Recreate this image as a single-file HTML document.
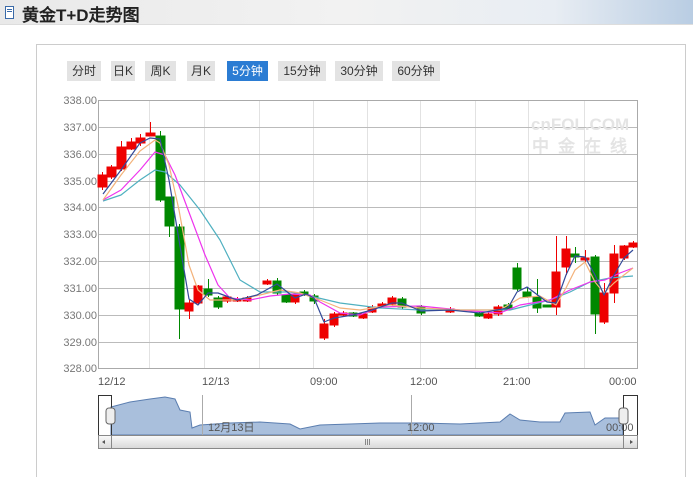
<!DOCTYPE html>
<html style="width:693px;height:477px;overflow:hidden"><head><meta charset="utf-8"><style>
body{margin:0;width:693px;height:477px;overflow:hidden;background:#fff;font-family:"Liberation Sans","Noto Sans CJK SC",sans-serif;position:relative}
.hdr{position:absolute;left:0;top:0;width:693px;height:24px;background:linear-gradient(90deg,#e9e9e9 0%,#f2f2f2 50%,#e8edf3 80%,#b9cde3 100%);border-bottom:1px solid #ddd}
.hdr .t{position:absolute;left:22px;top:1px;font-size:17px;font-weight:bold;color:#222;font-family:"Liberation Sans","WenQuanYi Zen Hei",sans-serif}
.ic{position:absolute;left:5px;top:6px;width:7px;height:11px;border:1px solid #3a6aa8;background:#fff}
.ic:after{content:"";position:absolute;left:1px;top:2px;width:5px;height:1px;background:#3a6aa8;box-shadow:0 2px #3a6aa8}
.panel{position:absolute;left:36px;top:44px;width:648px;height:432px;border:1px solid #ccc;border-bottom:none;background:#fff}
.btn{position:absolute;top:61px;height:20px;line-height:20px;font-size:12px;background:#e3e3e3;color:#333;text-align:center;font-family:"Liberation Sans","WenQuanYi Zen Hei",sans-serif}
.btn.on{background:#2b7cd3;color:#fff}
</style></head><body>
<div class="hdr"><div class="ic"></div><div class="t">黄金T+D走势图</div></div>
<div class="panel"></div>
<div class="btn" style="left:67px;width:34px">分时</div>
<div class="btn" style="left:111px;width:24px">日K</div>
<div class="btn" style="left:145px;width:31px">周K</div>
<div class="btn" style="left:187px;width:28px">月K</div>
<div class="btn on" style="left:227px;width:41px">5分钟</div>
<div class="btn" style="left:278px;width:48px">15分钟</div>
<div class="btn" style="left:335px;width:48px">30分钟</div>
<div class="btn" style="left:392px;width:48px">60分钟</div>
<svg width="693" height="477" style="position:absolute;left:0;top:0" font-family="Liberation Sans, sans-serif">
<g stroke="#e2e2e2" stroke-width="1">
<path d="M149.5 100V369M204.5 100V369M259.5 100V369M313.5 100V369M367.5 100V369M420.5 100V369M475.5 100V369M528.5 100V369M584.5 100V369"/>
</g>
<g stroke="#bbb" stroke-width="1">
<path d="M98 127.5H638M98 154.5H638M98 181.5H638M98 207.5H638M98 234.5H638M98 261.5H638M98 288.5H638M98 315.5H638M98 342.5H638"/>
</g>
<rect x="98.5" y="100.5" width="539" height="268" fill="none" stroke="#aaa"/>
<g fill="#777" font-size="11" text-anchor="end">
<text x="97" y="104">338.00</text><text x="97" y="131">337.00</text><text x="97" y="158">336.00</text><text x="97" y="185">335.00</text><text x="97" y="211">334.00</text><text x="97" y="238">333.00</text><text x="97" y="265">332.00</text><text x="97" y="292">331.00</text><text x="97" y="319">330.00</text><text x="97" y="346">329.00</text><text x="97" y="372">328.00</text>
</g>
<g fill="#e4e4e4" font-weight="bold"><text x="531" y="130" font-size="17">cnFOL.COM</text><text x="532" y="152" font-size="17" letter-spacing="9" font-family="WenQuanYi Zen Hei, sans-serif">中金在线</text></g>
<g fill="#555" font-size="11">
<text x="98" y="385">12/12</text><text x="202" y="385">12/13</text><text x="310" y="385">09:00</text><text x="410" y="385">12:00</text><text x="503" y="385">21:00</text><text x="609" y="385">00:00</text>
</g>
<g id="c" stroke-width="1">
<g stroke="#e00" fill="#e00">
<path d="M102.5 172V190M111.5 165V179M121.5 141V171M131.5 138V150M140.5 134V146M150.5 122V136M189.5 300V319M198.5 285V305M227.5 295V303M237.5 297V302M247.5 296V302M267.5 279V285M295.5 292V304M324.5 319V340M334.5 312V327M343.5 311V316M363.5 313V319M372.5 305V313M382.5 302V307M392.5 296V306M450.5 307V313M488.5 312V319M498.5 305V316M556.5 236V315M566.5 236V275M585.5 250V262M604.5 283V324M614.5 245V303M624.5 245V260M633.5 241V248"/>
<rect x="98" y="175" width="9" height="12"/><rect x="107" y="167" width="9" height="10"/><rect x="117" y="147" width="9" height="22"/><rect x="127" y="142" width="9" height="7"/><rect x="136" y="138" width="9" height="5"/><rect x="146" y="133" width="9" height="3"/>
<rect x="185" y="303" width="8" height="8"/><rect x="194" y="286" width="8" height="17"/><rect x="223" y="297" width="8" height="4"/><rect x="233" y="299" width="8" height="2"/><rect x="243" y="298" width="8" height="3"/><rect x="263" y="281" width="8" height="3"/><rect x="291" y="294" width="8" height="8"/>
<rect x="320" y="324" width="8" height="14"/><rect x="330" y="314" width="8" height="11"/><rect x="339" y="313" width="8" height="2"/><rect x="359" y="314" width="8" height="4"/><rect x="368" y="307" width="8" height="5"/><rect x="378" y="304" width="8" height="2"/><rect x="388" y="298" width="8" height="6"/><rect x="446" y="309" width="8" height="3"/><rect x="484" y="314" width="8" height="4"/><rect x="494" y="307" width="8" height="7"/>
<rect x="552" y="272" width="8" height="35"/><rect x="562" y="249" width="8" height="18"/><rect x="581" y="258" width="8" height="2"/><rect x="600" y="293" width="8" height="29"/><rect x="610" y="254" width="8" height="39"/><rect x="620" y="246" width="8" height="12"/><rect x="629" y="243" width="8" height="4"/>
</g>
<g stroke="#080" fill="#080">
<path d="M160.5 131V202M169.5 197V237M179.5 224V339M208.5 279V297M218.5 296V309M277.5 278V295M286.5 294V303M304.5 290V296M314.5 294V304M353.5 312V317M402.5 297V309M421.5 305V315M479.5 312V317M508.5 303V310M517.5 263V291M527.5 287V298M537.5 279V313M575.5 247V263M595.5 255V334"/>
<rect x="156" y="136" width="9" height="64"/><rect x="165" y="197" width="9" height="29"/><rect x="175" y="227" width="9" height="82"/><rect x="204" y="289" width="8" height="6"/><rect x="214" y="298" width="8" height="9"/><rect x="273" y="281" width="8" height="12"/><rect x="282" y="295" width="8" height="7"/><rect x="300" y="292" width="8" height="2"/><rect x="310" y="296" width="8" height="5"/><rect x="349" y="313" width="8" height="3"/><rect x="398" y="299" width="8" height="8"/><rect x="417" y="307" width="8" height="6"/><rect x="475" y="313" width="8" height="3"/><rect x="504" y="305" width="8" height="4"/><rect x="513" y="268" width="8" height="21"/><rect x="523" y="292" width="8" height="5"/><rect x="533" y="297" width="8" height="11"/><rect x="543" y="305" width="8" height="2"/><rect x="571" y="254" width="8" height="3"/><rect x="591" y="257" width="8" height="57"/>
</g>
</g>
<g fill="none" stroke-width="1.2" stroke-linejoin="round">
<polyline stroke="#4fb0c0" points="103,201 121,195 140,180 155,170 165,172 180,185 200,210 220,240 240,280 260,292 290,292 310,296 340,303 380,308 420,310 470,310 510,310 530,305 550,300 570,292 590,282 610,278 633,276"/>
<polyline stroke="#ee33ee" points="103,200 121,190 140,170 155,152 165,155 175,175 190,215 205,255 218,285 230,298 250,300 270,296 290,294 310,295 320,302 340,313 360,315 380,307 420,306 460,310 500,313 520,305 550,300 570,290 590,282 605,280 620,273 633,268"/>
<polyline stroke="#f3b27a" points="103,200 121,175 140,151 155,140 160,143 169,165 179,210 189,265 198,290 210,300 237,300 260,295 280,290 300,293 320,300 340,308 360,310 390,305 420,308 460,310 500,310 520,298 540,296 556,305 566,288 575,270 585,262 595,282 604,293 614,283 624,275 633,268"/>
<polyline stroke="#334a99" points="103,194 121,170 140,143 150,138 160,139 169,180 179,240 189,299 198,305 208,293 218,293 237,300 257,295 277,284 295,298 306,294 314,298 324,322 334,318 353,315 372,310 392,303 402,303 421,311 450,310 480,313 508,308 517,292 527,287 547,302 556,303 566,275 575,256 585,257 595,275 604,295 614,275 624,258 633,250"/>
</g>
<path d="M111 407L130 402L150 399L165 397L175 399L180 410L190 412L192 428L200 425L230 423L260 422L290 424L300 429L320 425L350 424L380 423L420 423L460 424L500 422L510 414L520 420L540 422L560 422L565 413L590 412L595 425L605 418L623 418L623 435L111 435Z" fill="#a9bfdc" stroke="#5b7eb0"/>
<path d="M202.5 395V435M411.5 395V435" stroke="#aaa"/>
<g fill="#555" font-size="11" font-family="Liberation Sans, WenQuanYi Zen Hei, sans-serif"><text x="208" y="431">12月13日</text><text x="407" y="431">12:00</text><text x="606" y="431">00:00</text></g>
<path d="M98.5 435V395.5H111.5V435M637.5 435V395.5H623.5V435" fill="none" stroke="#333"/>
<rect x="106" y="408" width="9" height="16" rx="3" fill="#eee" stroke="#666"/>
<rect x="619" y="408" width="9" height="16" rx="3" fill="#eee" stroke="#666"/>
<defs><linearGradient id="g" x1="0" y1="0" x2="0" y2="1"><stop offset="0" stop-color="#fafafa"/><stop offset="1" stop-color="#d8d8d8"/></linearGradient></defs>
<rect x="98.5" y="435.5" width="539" height="13" fill="url(#g)" stroke="#888"/>
<path d="M111.5 436V448M623.5 436V448" stroke="#888"/>
<path d="M105 440L102 442L105 444Z M630 440L633 442L630 444Z" fill="#555"/>
<path d="M365.5 439V445M367.5 439V445M369.5 439V445" stroke="#888"/>
</svg>
</body></html>
